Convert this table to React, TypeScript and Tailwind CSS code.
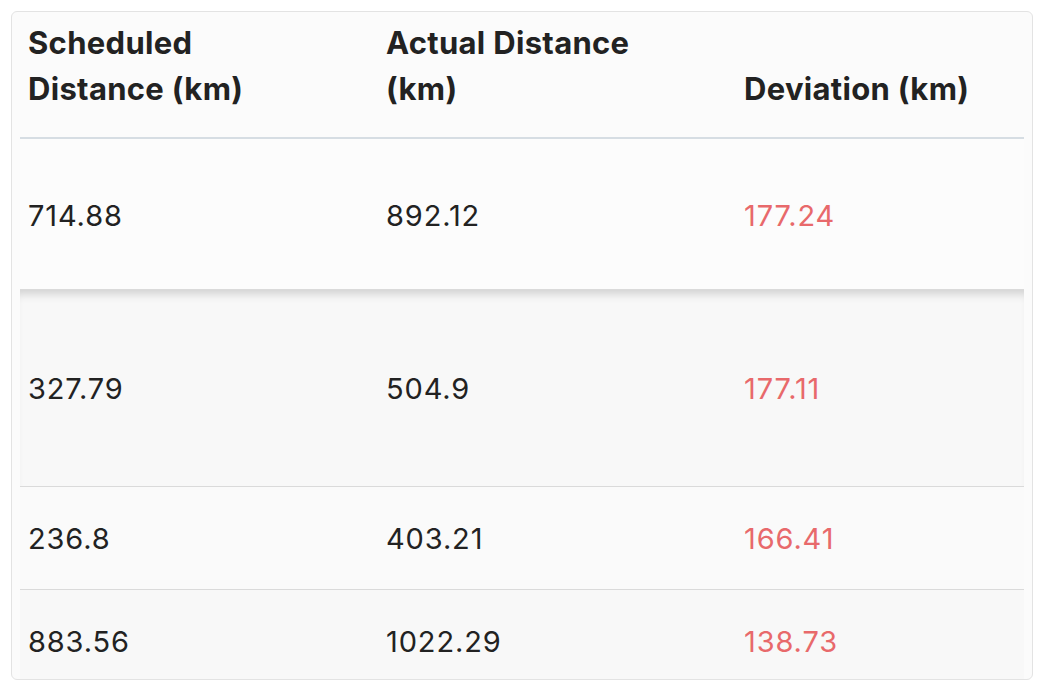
const rows = [
  { scheduled: '714.88', actual: '892.12', deviation: '177.24', height: 'h-[150px]', bg: 'bg-[#fcfcfc]', shadow: '' },
  {
    scheduled: '327.79',
    actual: '504.9',
    deviation: '177.11',
    height: 'h-[197px]',
    bg: 'bg-[#f8f8f8]',
    shadow: 'shadow-[inset_0_10px_10px_-6px_rgba(0,0,0,0.16)]',
  },
  { scheduled: '236.8', actual: '403.21', deviation: '166.41', height: 'h-[103px]', bg: 'bg-[#fafafa]', shadow: '' },
  { scheduled: '883.56', actual: '1022.29', deviation: '138.73', height: 'h-[103px]', bg: 'bg-[#f8f8f8]', shadow: '' },
];

export default function App() {
  return (
    <div className="w-[1044px] h-[690px] bg-white p-[11px] font-['Inter',sans-serif] text-[#222]">
      <div className="h-[669px] rounded-[6px] border border-[#e3e3e3] bg-[#fbfbfb] px-[8px] pt-[8px] overflow-hidden">
        <div className="grid grid-cols-[358px_358px_290px] border-b-2 border-[#d6dde3] font-bold text-[31px] leading-[46px] tracking-[0.01em] items-end pb-[25px]">
          <div className="px-2">Scheduled<br />Distance (km)</div>
          <div className="px-2">Actual Distance<br />(km)</div>
          <div className="px-2">Deviation (km)</div>
        </div>
        {rows.map((r, i) => (
          <div
            key={i}
            className={`grid grid-cols-[358px_358px_290px] items-center text-[29px] tracking-[0.03em] ${
              i === 0 ? 'pt-[3px]' : 'pt-px'
            } ${r.height} ${r.bg} ${r.shadow} ${i > 0 ? 'border-t border-[#dadada]' : ''}`}
          >
            <div className="px-2">{r.scheduled}</div>
            <div className="px-2">{r.actual}</div>
            <div className="px-2 text-[#e8696b]">{r.deviation}</div>
          </div>
        ))}
      </div>
    </div>
  );
}
